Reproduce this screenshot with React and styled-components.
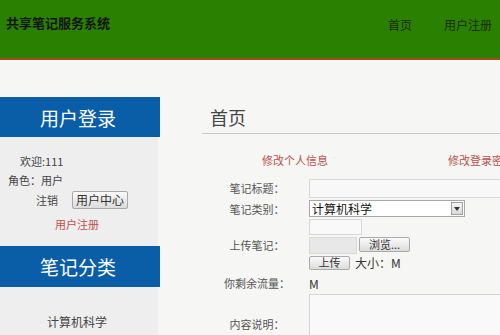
import React from "react";
import styled, { createGlobalStyle } from "styled-components";

const GlobalStyle = createGlobalStyle`
  html, body {
    margin: 0;
    padding: 0;
    background: #f6f6f4;
    overflow: hidden;
  }
  body {
    font-family: "Noto Sans CJK SC", "Liberation Sans", sans-serif;
    color: #444;
  }
`;

const Page = styled.div`
  width: 500px;
  height: 335px;
  overflow: hidden;
`;

const Header = styled.div`
  height: 58px;
  background: #2a8000;
  border-bottom: 2px solid #a44a1f;
  display: flex;
  justify-content: space-between;
  align-items: flex-start;
  padding: 14px 8px 0 6px;
  box-sizing: border-box;
  height: 60px;
`;

const Title = styled.div`
  font-size: 13px;
  font-weight: bold;
  line-height: 18px;
  color: #151515;
`;

const Nav = styled.div`
  display: flex;
  gap: 32px;
  margin-top: 2px;
`;

const NavItem = styled.span`
  font-size: 12px;
  line-height: 18px;
  color: #1e2a10;
`;

const Body = styled.div`
  display: flex;
  align-items: flex-start;
  gap: 42px;
  width: 900px;
`;

const Sidebar = styled.div`
  width: 160px;
  flex-shrink: 0;
  margin-top: 37px;
`;

const BlueBar = styled.div`
  height: ${p => p.h || 40}px;
  background: #0a5ea8;
  color: #fff;
  font-size: 19px;
  display: flex;
  align-items: center;
  justify-content: center;
  padding-right: 4px;
`;

const Panel = styled.div`
  background: #eeeeee;
  margin-right: 2px;
  padding: ${p => p.pad || "0"};
`;

const InfoLine = styled.div`
  font-size: 11px;
  line-height: 19px;
  color: #444;
  padding-left: ${p => p.indent || 0}px;
`;

const LogoutRow = styled.div`
  display: flex;
  align-items: center;
  height: 20px;
  padding-left: 36px;
  gap: 14px;
  font-size: 11px;
  color: #444;
`;

const Button = styled.button`
  font-family: inherit;
  font-size: ${p => p.fs || 11}px;
  color: #333;
  width: ${p => p.w}px;
  height: ${p => p.h}px;
  padding: 0;
  line-height: 1;
  background: linear-gradient(#fafafa, #dcdcdc);
  border: 1px solid #a9a9a9;
  border-radius: 2px;
`;

const CenterText = styled.div`
  text-align: center;
  font-size: ${p => p.fs || 11}px;
  line-height: 19px;
  color: ${p => p.color || "#444"};
  margin-top: ${p => p.mt || 0}px;
  margin-bottom: ${p => p.mb || 0}px;
  padding-right: 4px;
`;

const Main = styled.div`
  width: 600px;
  flex-shrink: 0;
`;

const Heading = styled.div`
  margin-top: 45px;
  padding: 0 0 4px 8px;
  font-size: 18px;
  line-height: 24px;
  color: #444;
  border-bottom: 1px solid #c9c9c9;
`;

const LinkRow = styled.div`
  display: flex;
  margin-top: 17px;
`;

const LinkCell = styled.div`
  width: 186px;
  text-align: center;
  font-size: 11px;
  line-height: 18px;
  color: #b8524a;
  white-space: nowrap;
`;

const Form = styled.div`
  display: grid;
  grid-template-columns: 100px 1fr;
  grid-template-rows: 22px 19px 54px 22px 60px;
  column-gap: 2px;
  margin: 8px 0 0 5px;
`;

const Label = styled.div`
  font-size: 11px;
  color: #555;
  text-align: center;
  align-self: center;
  white-space: nowrap;
`;

const Field = styled.div`
  display: flex;
  flex-direction: ${p => (p.stack ? "column" : "row")};
  align-items: ${p => (p.stack ? "flex-start" : "center")};
  padding-top: ${p => (p.stack ? 1 : 0)}px;
  font-size: 12px;
  color: #333;
`;

const TextInput = styled.div`
  width: ${p => p.w}px;
  height: ${p => p.h}px;
  box-sizing: border-box;
  background: ${p => p.bg || "#f8f8f8"};
  border: 1px solid #d8d8d8;
  margin-bottom: ${p => p.mb || 0}px;
`;

const Select = styled.div`
  width: 156px;
  height: 17px;
  box-sizing: border-box;
  border: 1px solid #a8a8a8;
  background: #fff;
  display: flex;
  align-items: center;
  justify-content: space-between;
  font-size: 12px;
  color: #111;
  padding-left: 2px;
`;

const Arrow = styled.div`
  width: 12px;
  height: 13px;
  margin-right: 1px;
  border: 1px solid #a0a0a0;
  box-sizing: border-box;
  background: linear-gradient(#f4f4f4, #d8d8d8);
  display: flex;
  align-items: center;
  justify-content: center;
`;

const InlineRow = styled.div`
  display: flex;
  align-items: ${p => p.align || "center"};
  gap: ${p => p.gap || 0}px;
`;

const SizeText = styled.span`
  font-size: 12px;
  color: #333;
`;

const TextArea = styled.div`
  width: 260px;
  height: 60px;
  box-sizing: border-box;
  border: 1px solid #d4d4d4;
  background: #f9f9f9;
`;

export default function App() {
  return (
    <Page>
      <GlobalStyle />
      <Header>
        <Title>共享笔记服务系统</Title>
        <Nav>
          <NavItem>首页</NavItem>
          <NavItem>用户注册</NavItem>
        </Nav>
      </Header>
      <Body>
        <Sidebar>
          <BlueBar>用户登录</BlueBar>
          <Panel pad="15px 0 12px 0">
            <InfoLine indent={20}>欢迎:111</InfoLine>
            <InfoLine indent={8}>角色：用户</InfoLine>
            <LogoutRow>
              <span>注销</span>
              <Button w={56} h={18} fs={12}>用户中心</Button>
            </LogoutRow>
            <CenterText color="#c0504a" mt={5}>用户注册</CenterText>
          </Panel>
          <BlueBar h={41}>笔记分类</BlueBar>
          <Panel pad="25px 0 20px 0">
            <CenterText fs={12}>计算机科学</CenterText>
          </Panel>
        </Sidebar>
        <Main>
          <Heading>首页</Heading>
          <LinkRow>
            <LinkCell>修改个人信息</LinkCell>
            <LinkCell>修改登录密码</LinkCell>
          </LinkRow>
          <Form>
            <Label>笔记标题：</Label>
            <Field>
              <TextInput w={260} h={19} />
            </Field>
            <Label>笔记类别：</Label>
            <Field>
              <Select>
                计算机科学
                <Arrow>
                  <svg width="6" height="4" viewBox="0 0 6 4">
                    <path d="M0 0H6L3 4Z" fill="#333" />
                  </svg>
                </Arrow>
              </Select>
            </Field>
            <Label>上传笔记：</Label>
            <Field stack>
              <TextInput w={53} h={16} bg="#f9f9f9" mb={2} />
              <InlineRow align="flex-start" gap={2}>
                <TextInput w={48} h={17} bg="#e8e8e8" />
                <Button w={51} h={15} fs={11}>浏览...</Button>
              </InlineRow>
              <InlineRow gap={5}>
                <Button w={41} h={14} fs={11}>上传</Button>
                <SizeText>大小：M</SizeText>
              </InlineRow>
            </Field>
            <Label>你剩余流量：</Label>
            <Field>M</Field>
            <Label>内容说明：</Label>
            <Field>
              <TextArea />
            </Field>
          </Form>
        </Main>
      </Body>
    </Page>
  );
}
